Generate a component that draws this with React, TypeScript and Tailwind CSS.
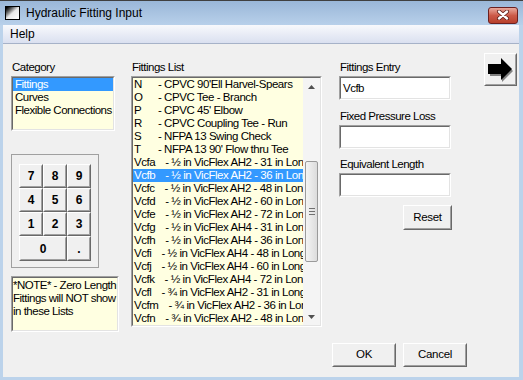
import type { ReactNode } from "react";

const FONT = "font-['Liberation_Sans',Arial,sans-serif]";

const fittings: [string, string][] = [
  ["N", "- CPVC 90'Ell Harvel-Spears"],
  ["O", "- CPVC Tee - Branch"],
  ["P", "- CPVC 45' Elbow"],
  ["R", "- CPVC Coupling Tee - Run"],
  ["S", "- NFPA 13 Swing Check"],
  ["T", "- NFPA 13 90' Flow thru Tee"],
  ["Vcfa", "- ½ in VicFlex AH2 - 31 in Long"],
  ["Vcfb", "- ½ in VicFlex AH2 - 36 in Long"],
  ["Vcfc", "- ½ in VicFlex AH2 - 48 in Long"],
  ["Vcfd", "- ½ in VicFlex AH2 - 60 in Long"],
  ["Vcfe", "- ½ in VicFlex AH2 - 72 in Long"],
  ["Vcfg", "- ½ in VicFlex AH4 - 31 in Long"],
  ["Vcfh", "- ½ in VicFlex AH4 - 36 in Long"],
  ["Vcfi", "- ½ in VicFlex AH4 - 48 in Long"],
  ["Vcfj", "- ½ in VicFlex AH4 - 60 in Long"],
  ["Vcfk", "- ½ in VicFlex AH4 - 72 in Long"],
  ["Vcfl", "- ¾ in VicFlex AH2 - 31 in Long"],
  ["Vcfm", "- ¾ in VicFlex AH2 - 36 in Long"],
  ["Vcfn", "- ¾ in VicFlex AH2 - 48 in Long"],
];

function Sunken({ className = "", children }: { className?: string; children?: ReactNode }) {
  return (
    <div className={`border border-t-[#a0a0a0] border-l-[#a0a0a0] border-b-white border-r-white ${className}`}>
      <div className="h-full w-full overflow-hidden border border-t-[#696969] border-l-[#696969] border-b-[#e3e3e3] border-r-[#e3e3e3]">
        {children}
      </div>
    </div>
  );
}

function Btn({ className = "", children }: { className?: string; children?: ReactNode }) {
  return (
    <div className={`border border-t-white border-l-white border-b-[#696969] border-r-[#696969] bg-[#f0f0f0] ${className}`}>
      <div className="flex h-full w-full items-center justify-center border border-t-[#f0f0f0] border-l-[#f0f0f0] border-b-[#a0a0a0] border-r-[#a0a0a0]">
        {children}
      </div>
    </div>
  );
}

function Label({ children }: { children: ReactNode }) {
  return <div className="h-[16px] pl-px text-[11.5px] leading-[14px] tracking-[-0.5px]">{children}</div>;
}

function Scrollbar() {
  return (
    <div className="flex w-[17px] shrink-0 flex-col bg-[#f4f4f4]">
      <div className="flex h-[17px] items-center justify-center">
        <svg width="7" height="4" viewBox="0 0 7 4">
          <polygon points="0,4 3.5,0 7,4" fill="#505050" />
        </svg>
      </div>
      <div className="h-[66px]" />
      <div className="mx-[2px] flex h-[101px] flex-col items-center justify-center gap-[2px] rounded-[2px] border border-[#9a9a9a] bg-linear-to-r from-[#f4f4f4] to-[#dcdcdc]">
        <div className="h-px w-[6px] bg-[#707070]" />
        <div className="h-px w-[6px] bg-[#707070]" />
        <div className="h-px w-[6px] bg-[#707070]" />
      </div>
      <div className="flex-1" />
      <div className="flex h-[17px] items-center justify-center">
        <svg width="7" height="4" viewBox="0 0 7 4">
          <polygon points="0,0 7,0 3.5,4" fill="#505050" />
        </svg>
      </div>
    </div>
  );
}

export default function App() {
  const keys = ["7", "8", "9", "4", "5", "6", "1", "2", "3"];

  return (
    <div className={`flex h-[380px] w-[523px] flex-col overflow-hidden border-t border-t-[#404040] bg-[#bcd3eb] text-black ${FONT}`}>
      {/* title bar */}
      <div className="flex h-[24px] shrink-0 items-center bg-linear-to-b from-[#9ab7d8] to-[#b8d0ea] pl-[5px] pr-[5px]">
        <div className="h-[14px] w-[15px] border border-black bg-linear-to-br from-black via-[#e8e8e8] to-white" />
        <span className="ml-[6px] text-[12px] text-black">Hydraulic Fitting Input</span>
        <div className="ml-auto mt-[4px] flex h-[17px] w-[30px] items-center justify-center rounded-[3px] border border-[#6b2020] bg-linear-to-b from-[#e8a89c] via-[#cc5a48] to-[#b8402c]">
          <svg width="14" height="10" viewBox="0 0 14 10">
            <path d="M3 1.5 L11 8.5 M11 1.5 L3 8.5" stroke="#5a1a14" strokeWidth="4" strokeLinecap="round" />
            <path d="M3 1.5 L11 8.5 M11 1.5 L3 8.5" stroke="white" strokeWidth="2.4" strokeLinecap="round" />
          </svg>
        </div>
      </div>

      {/* client */}
      <div className="mb-[3px] ml-[3px] mr-[4px] flex flex-1 flex-col bg-[#f0f0f0]">
        <div className="flex h-[19px] shrink-0 items-center border-b border-b-[#a6b2c8] bg-linear-to-b from-[#f8f9fc] to-[#dae0f0] pl-[7px] text-[12px]">
          Help
        </div>

        <div className="flex flex-1 pl-[8px]">
          {/* column 1 */}
          <div className="flex w-[108px] flex-col pt-[16px]">
            <Label>Category</Label>
            <Sunken className="h-[55px] w-[104px] bg-[#ffffe1]">
              <div className="text-[11.5px] leading-[13px] tracking-[-0.5px]">
                <div className="bg-[#3399ff] pl-[2px] text-white">Fittings</div>
                <div className="pl-[2px]">Curves</div>
                <div className="whitespace-nowrap pl-[2px]">Flexible Connections</div>
              </div>
            </Sunken>

            <div className="mt-[23px] h-[114px] w-[88px] border border-[#a0a0a0] pl-[7px] pt-[9px]">
              <div className="grid w-[72px] grid-cols-3">
                {keys.map((k) => (
                  <Btn key={k} className="h-[24px] w-[24px]">
                    <span className="text-[12px] font-bold">{k}</span>
                  </Btn>
                ))}
                <Btn className="col-span-2 h-[25px]">
                  <span className="text-[12px] font-bold">0</span>
                </Btn>
                <Btn className="h-[25px]">
                  <span className="text-[12px] font-bold">.</span>
                </Btn>
              </div>
            </div>

            <Sunken className="mt-[8px] h-[56px] w-[108px] bg-[#ffffe1]">
              <div className="whitespace-nowrap pt-[1px] text-[11.5px] leading-[13px] tracking-[-0.5px]">
                *NOTE* - Zero Length
                <br />
                Fittings will NOT show
                <br />
                in these Lists
              </div>
            </Sunken>
          </div>

          {/* column 2 */}
          <div className="ml-[12px] flex flex-col pt-[16px]">
            <Label>Fittings List</Label>
            <Sunken className="h-[251px] w-[191px] bg-[#ffffe1]">
              <div className="flex h-full">
                <div className="min-w-0 flex-1 overflow-hidden text-[11.5px] leading-[13px] tracking-[-0.45px]">
                  {fittings.map(([code, desc], i) => (
                    <div
                      key={code}
                      className={`flex whitespace-nowrap pl-[1px] ${i === 7 ? "bg-[#3399ff] text-white" : ""}`}
                    >
                      <span className={code.length === 1 ? "w-[24px] shrink-0" : "shrink-0 pr-[10px]"}>{code}</span>
                      <span>{desc}</span>
                    </div>
                  ))}
                </div>
                <Scrollbar />
              </div>
            </Sunken>
          </div>

          {/* right area */}
          <div className="flex flex-1 flex-col">
            <div className="flex">
              <div className="ml-[17px] flex w-[113px] flex-col pt-[16px]">
                <Label>Fittings Entry</Label>
                <Sunken className="h-[24px] w-[112px] bg-white">
                  <div className="pl-[2px] pt-[3px] text-[11.5px] leading-[14px] tracking-[-0.5px]">Vcfb</div>
                </Sunken>
                <div className="mt-[9px]">
                  <Label>Fixed Pressure Loss</Label>
                </div>
                <Sunken className="h-[24px] w-[112px] bg-white" />
                <div className="mt-[8px]">
                  <Label>Equivalent Length</Label>
                </div>
                <Sunken className="h-[24px] w-[112px] bg-white" />
                <div className="mt-[8px] flex justify-end">
                  <Btn className="h-[25px] w-[49px]">
                    <span className="text-[11.5px] tracking-[-0.3px]">Reset</span>
                  </Btn>
                </div>
              </div>
              <div className="ml-[32px] mt-[9px]">
                <Btn className="h-[33px] w-[33px]">
                  <svg width="26" height="24" viewBox="0 0 26 24">
                    <polygon points="2,8 14,8 14,2 25,13 14,24 14,18 2,18" fill="#808080" />
                    <polygon points="0,6 13,6 13,0 24,11 13,22 13,16 0,16" fill="black" />
                  </svg>
                </Btn>
              </div>
            </div>
            <div className="mb-[10px] mt-auto flex gap-[7px] pl-[10px]">
              <Btn className="h-[24px] w-[64px]">
                <span className="text-[11.5px] tracking-[-0.3px]">OK</span>
              </Btn>
              <Btn className="h-[24px] w-[64px]">
                <span className="text-[11.5px] tracking-[-0.3px]">Cancel</span>
              </Btn>
            </div>
          </div>
        </div>
      </div>
    </div>
  );
}
